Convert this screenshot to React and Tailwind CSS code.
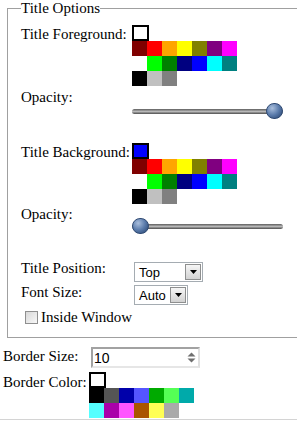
import React from "react";

const basic = [
  ["#800000", "#ff0000", "#ffa500", "#ffff00", "#808000", "#800080", "#ff00ff"],
  ["#ffffff", "#00ff00", "#008000", "#000080", "#0000ff", "#00ffff", "#008080"],
  ["#000000", "#c0c0c0", "#808080"],
];

const ega = [
  ["#000000", "#555555", "#0000aa", "#5555ff", "#00aa00", "#55ff55", "#00aaaa"],
  ["#55ffff", "#aa00aa", "#ff55ff", "#aa5500", "#ffff55", "#aaaaaa"],
];

const Palette = ({ rows, current }) => (
  <div className="flex flex-col">
    <div className="h-[16px] w-[17px] border-2 border-black" style={{ background: current }} />
    {rows.map((row, i) => (
      <div key={i} className="flex">
        {row.map((c, j) => (
          <div key={j} className="h-[15px] w-[15px]" style={{ background: c }} />
        ))}
      </div>
    ))}
  </div>
);

const Slider = ({ value }) => (
  <div className="relative h-[16px] w-[151px]">
    <div className="absolute left-0 right-0 top-[6px] h-[5px] rounded-full bg-linear-to-b from-[#5e5e5e] via-[#b8b8b8] to-[#4e4e4e]" />
    <div
      className="absolute top-0 h-[16px] w-[17px] rounded-full border border-[#2f4a73] bg-radial-[at_35%_30%] from-[#a9bedc] via-[#5a7bab] to-[#24406b]"
      style={{ left: `${value * (151 - 17)}px` }}
    />
  </div>
);

const Select = ({ value, width }) => (
  <div className={`flex h-[20px] items-center border border-[#a5acb2] bg-white ${width}`}>
    <span className="flex-1 pl-[4px] font-['Liberation_Sans',Arial,sans-serif] text-[13px] leading-none text-[#000]">
      {value}
    </span>
    <span className="mr-[1px] flex h-[16px] w-[16px] items-center justify-center border border-[#8e8f8f] bg-linear-to-b from-[#f6f6f6] to-[#d2d2d2]">
      <svg width="7" height="4" viewBox="0 0 7 4">
        <path d="M0 0h7L3.5 4z" fill="#000" />
      </svg>
    </span>
  </div>
);

const Label = ({ children, className = "" }) => (
  <div className={`w-[111px] shrink-0 leading-[18px] ${className}`}>{children}</div>
);

export default function App() {
  return (
    <div className="relative h-[421px] w-[297px] overflow-hidden bg-white font-['Liberation_Serif','Times_New_Roman',serif] text-[15px] text-black">
      <fieldset className="ml-[7px] w-[300px] border border-[#a0a0a0] pb-[11px] pl-[13px]">
        <legend className="text-[15px] leading-[16px]">Title Options</legend>

        <div className="mt-[9px] flex">
          <Label>Title Foreground:</Label>
          <Palette rows={basic} current="#ffffff" />
        </div>

        <div className="mt-[2px] flex">
          <Label>Opacity:</Label>
          <div className="mt-[15px]">
            <Slider value={1} />
          </div>
        </div>

        <div className="mt-[24px] flex">
          <Label>Title Background:</Label>
          <Palette rows={basic} current="#0000ff" />
        </div>

        <div className="mt-[1px] flex">
          <Label>Opacity:</Label>
          <div className="mt-[13px]">
            <Slider value={0} />
          </div>
        </div>

        <div className="mt-[25px] flex">
          <Label>Title Position:</Label>
          <div className="ml-[2px] mt-[3px]">
            <Select value="Top" width="w-[69px]" />
          </div>
        </div>

        <div className="mt-[1px] flex">
          <Label>Font Size:</Label>
          <div className="ml-[2px] mt-[2px]">
            <Select value="Auto" width="w-[54px]" />
          </div>
        </div>

        <div className="mt-[3px] flex items-start">
          <span className="ml-[4px] mt-[3px] h-[13px] w-[13px] border border-[#8f8f8f] bg-linear-to-br from-[#d8d8d8] to-[#f8f8f8]" />
          <span className="ml-[3px] leading-[18px]">Inside Window</span>
        </div>
      </fieldset>

      <div className="mt-[9px] flex">
        <div className="w-[91px] shrink-0 pl-[3px] leading-[18px]">Border Size:</div>
        <div className="flex h-[21px] w-[109px] items-center border-2 border-[#a2a2a2] border-b-[#e6e6e6] border-r-[#e0e0e0] bg-white">
          <span className="flex-1 pl-[1px] font-['Liberation_Sans',Arial,sans-serif] text-[14px] leading-none">10</span>
          <svg width="9" height="11" viewBox="0 0 9 11" className="mr-[2px]">
            <path d="M0.5 4.5L4.5 0.5L8.5 4.5z" fill="#6f6f6f" />
            <path d="M0.5 6.5h8L4.5 10.5z" fill="#6f6f6f" />
          </svg>
        </div>
      </div>

      <div className="mt-[4px] flex">
        <div className="w-[89px] shrink-0 pl-[3px] pt-[1px] leading-[18px]">Border Color:</div>
        <Palette rows={ega} current="#ffffff" />
      </div>

      <div className="mt-[1px] border-t border-[#d4d4d4]" />
    </div>
  );
}
